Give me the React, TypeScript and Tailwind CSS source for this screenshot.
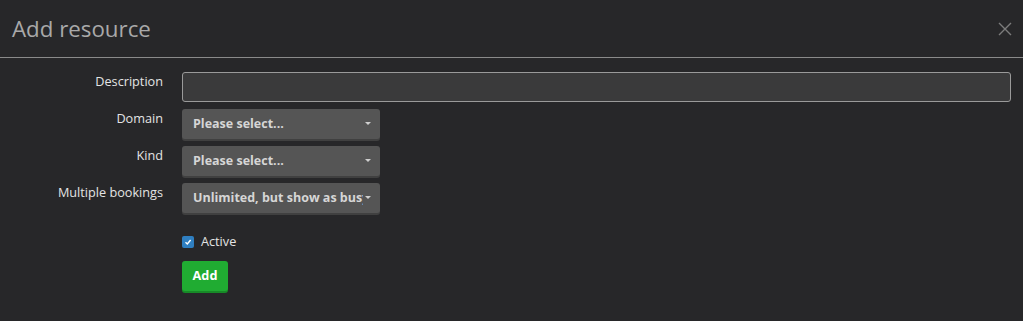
const Caret = () => (
  <span className="absolute right-[9px] top-[13px] h-0 w-0 border-x-[3px] border-t-[3px] border-x-transparent border-t-[#cfcfcf]" />
)

const SelectBox = ({ text }: { text: string }) => (
  <div className="relative flex h-[30px] w-[198px] items-center overflow-hidden rounded-[3px] bg-[#555555] pl-[11px] text-[12.5px] font-bold text-[#d6d6d6] shadow-[0_2px_0_#404040]">
    <span className="w-[170px] overflow-hidden whitespace-nowrap">{text}</span>
    <Caret />
  </div>
)

const Row = ({ label, children }: { label: string; children: React.ReactNode }) => (
  <div className="flex">
    <div className="w-[163px] text-right text-[12.7px] text-[#e4e4e4]">{label}</div>
    <div className="ml-[19px] flex-1">{children}</div>
  </div>
)

export default function App() {
  return (
    <div className="h-[321px] w-full bg-[#272729]" style={{ fontFamily: '"Open Sans", "Noto Sans", sans-serif' }}>
      {/* header */}
      <div className="flex h-[58px] items-center border-b border-[#8a8a8a] pl-[12px] pr-[10px]">
        <h1 className="text-[22.3px] text-[#a9a9a9]">Add resource</h1>
        <button className="ml-auto text-[#7c7c7c]">
          <svg width="16" height="16" viewBox="0 0 16 16" fill="none" stroke="currentColor" strokeWidth="1.4">
            <path d="M2 2 L14 14 M14 2 L2 14" />
          </svg>
        </button>
      </div>

      {/* form */}
      <div className="flex flex-col gap-[7px] pr-[12px] pt-[14px]">
        <Row label="Description">
          <div className="h-[30px] w-full rounded-[3px] border border-[#9a9a9a] bg-[#3a3a3b]" />
        </Row>
        <Row label="Domain">
          <SelectBox text="Please select..." />
        </Row>
        <Row label="Kind">
          <SelectBox text="Please select..." />
        </Row>
        <Row label="Multiple bookings">
          <SelectBox text="Unlimited, but show as busy" />
        </Row>
      </div>

      <div className="ml-[182px] mt-[20px] flex h-[18px] items-center gap-[7px]">
        <span className="flex h-[12px] w-[12px] items-center justify-center rounded-[2px] bg-[#2f7fc1]">
          <svg width="8" height="8" viewBox="0 0 8 8" fill="none" stroke="white" strokeWidth="1.4">
            <path d="M1.5 4.2 L3.3 6 L6.6 2" />
          </svg>
        </span>
        <span className="text-[12.7px] text-[#e4e4e4]">Active</span>
      </div>
      <button className="ml-[182px] mt-[10px] block h-[30px] w-[46px] rounded-[3px] bg-[#20ac32] text-[12.7px] font-bold text-white shadow-[0_2px_0_#178a27]">
        Add
      </button>
    </div>
  )
}
